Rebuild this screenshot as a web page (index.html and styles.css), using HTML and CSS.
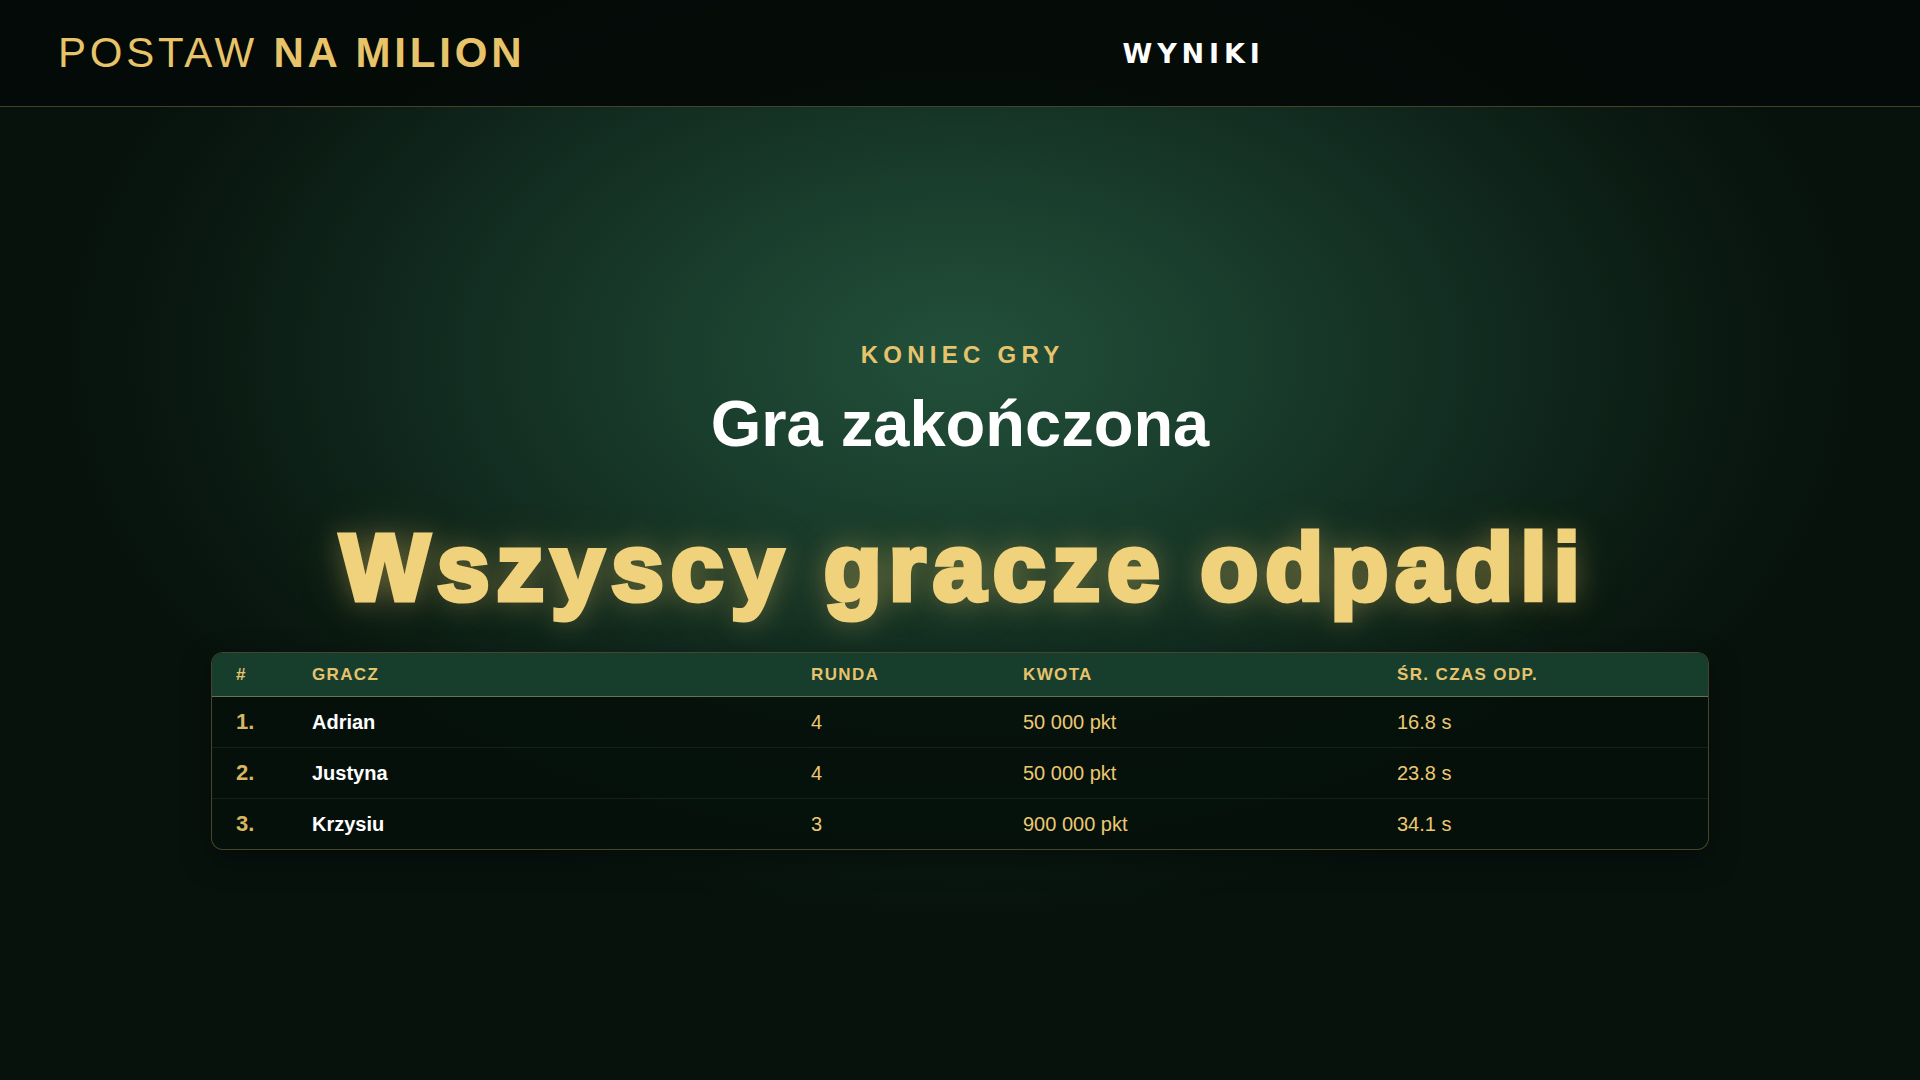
FILE: index.html
```html
<!DOCTYPE html>
<html lang="pl">
<head>
<meta charset="utf-8">
<title>Postaw na milion – Wyniki</title>
<link rel="stylesheet" href="styles.css">
</head>
<body>
<header class="topbar">
  <div class="logo"><span class="logo-light">POSTAW</span> <span class="logo-bold">NA MILION</span></div>
  <nav class="nav"><span class="nav-item">WYNIKI</span></nav>
</header>
<main class="results">
  <div class="eyebrow">KONIEC GRY</div>
  <h1 class="title">Gra zakończona</h1>
  <h2 class="verdict">Wszyscy gracze odpadli</h2>
  <div class="board">
    <div class="board-row board-head">
      <div>#</div><div>GRACZ</div><div>RUNDA</div><div>KWOTA</div><div>ŚR. CZAS ODP.</div>
    </div>
    <div class="board-row">
      <div class="rank">1.</div><div class="name">Adrian</div><div>4</div><div>50 000 pkt</div><div>16.8 s</div>
    </div>
    <div class="board-row">
      <div class="rank">2.</div><div class="name">Justyna</div><div>4</div><div>50 000 pkt</div><div>23.8 s</div>
    </div>
    <div class="board-row">
      <div class="rank">3.</div><div class="name">Krzysiu</div><div>3</div><div>900 000 pkt</div><div>34.1 s</div>
    </div>
  </div>
</main>
</body>
</html>
```
FILE: styles.css
```css
html, body {
  margin: 0;
  padding: 0;
}
body {
  min-height: 100vh;
  font-family: "Liberation Sans", Arial, sans-serif;
  color: #ffffff;
  background:
    radial-gradient(ellipse 900px 560px at 50% 33%, #22503b 0%, #1a3e2d 30%, #112a1f 60%, #0a1911 85%, #07120d 100%);
  background-color: #07120d;
}
.topbar {
  height: 107px;
  box-sizing: border-box;
  display: flex;
  align-items: center;
  padding: 0 58px;
  background: rgba(4, 10, 7, 0.92);
  border-bottom: 1px solid rgba(196, 170, 100, 0.35);
}
.logo {
  font-size: 42px;
  letter-spacing: 0.09em;
  color: #e7c36a;
  white-space: nowrap;
}
.logo-light { font-weight: 400; }
.logo-bold { font-weight: 700; }
.nav {
  flex: 1;
  display: flex;
  justify-content: center;
}
.nav-item {
  font-family: "DejaVu Sans", Verdana, sans-serif;
  font-size: 27px;
  font-weight: 700;
  letter-spacing: 0.18em;
  color: #ffffff;
}
.results {
  display: flex;
  flex-direction: column;
  align-items: center;
  padding-top: 233px;
  padding-bottom: 80px;
}
.eyebrow {
  font-size: 24px;
  line-height: 29px;
  font-weight: 700;
  letter-spacing: 0.22em;
  color: #e6c36c;
  padding-left: 0.22em;
}
.title {
  margin: 16px 0 0;
  font-size: 65px;
  line-height: 77px;
  font-weight: 700;
  color: #ffffff;
}
.verdict {
  margin: 45px 0 0;
  padding-left: 7px;
  font-size: 95px;
  line-height: 120px;
  font-weight: 700;
  letter-spacing: 7px;
  color: #f0d27c;
  -webkit-text-stroke: 5px #f0d27c;
  text-shadow: 0 0 28px rgba(240, 200, 100, 0.45), 0 0 60px rgba(240, 200, 100, 0.2);
}
.board {
  margin-top: 25px;
  width: 1496px;
  border: 1px solid rgba(196, 170, 100, 0.35);
  border-radius: 12px;
  overflow: hidden;
  background: rgba(5, 16, 11, 0.92);
  box-shadow: 0 10px 30px rgba(0, 0, 0, 0.35);
}
.board-row {
  display: grid;
  grid-template-columns: 76px 499px 212px 374px 1fr;
  align-items: center;
  height: 50px;
  padding: 0 24px;
  font-size: 20px;
  color: #ecc872;
  border-top: 1px solid rgba(255, 255, 255, 0.07);
}
.board-head {
  height: 43px;
  border-top: none;
  background: #173d2c;
  border-bottom: 1px solid rgba(196, 170, 100, 0.5);
  font-size: 17px;
  font-weight: 700;
  letter-spacing: 0.08em;
  color: #e6c36c;
}
.board-head + .board-row {
  border-top: none;
}
.rank {
  font-size: 22px;
  font-weight: 700;
  color: #d9b660;
}
.name {
  font-weight: 700;
  color: #ffffff;
}
```
